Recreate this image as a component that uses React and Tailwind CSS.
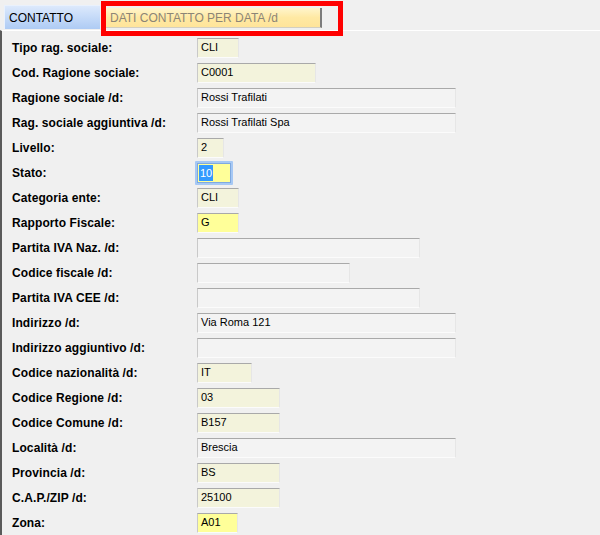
import React from 'react';

const beige = 'bg-[#f3f3dc]';
const yellow = 'bg-[#ffff99]';
const gray = 'bg-[#f3f3f3]';

const rows = [
  { label: 'Tipo rag. sociale:', value: 'CLI', w: 'w-[42px]', bg: beige },
  { label: 'Cod. Ragione sociale:', value: 'C0001', w: 'w-[119px]', bg: beige },
  { label: 'Ragione sociale /d:', value: 'Rossi Trafilati', w: 'w-[259px]', bg: gray },
  { label: 'Rag. sociale aggiuntiva /d:', value: 'Rossi Trafilati Spa', w: 'w-[259px]', bg: gray },
  { label: 'Livello:', value: '2', w: 'w-[27px]', bg: beige },
  { label: 'Stato:', value: '10', w: 'w-[34px]', bg: yellow, focused: true },
  { label: 'Categoria ente:', value: 'CLI', w: 'w-[42px]', bg: beige },
  { label: 'Rapporto Fiscale:', value: 'G', w: 'w-[42px]', bg: yellow },
  { label: 'Partita IVA Naz. /d:', value: '', w: 'w-[223px]', bg: gray },
  { label: 'Codice fiscale /d:', value: '', w: 'w-[153px]', bg: gray },
  { label: 'Partita IVA CEE /d:', value: '', w: 'w-[223px]', bg: gray },
  { label: 'Indirizzo /d:', value: 'Via Roma 121', w: 'w-[259px]', bg: gray },
  { label: 'Indirizzo aggiuntivo /d:', value: '', w: 'w-[259px]', bg: gray },
  { label: 'Codice nazionalità /d:', value: 'IT', w: 'w-[55px]', bg: beige },
  { label: 'Codice Regione /d:', value: '03', w: 'w-[83px]', bg: beige },
  { label: 'Codice Comune /d:', value: 'B157', w: 'w-[83px]', bg: beige },
  { label: 'Località /d:', value: 'Brescia', w: 'w-[259px]', bg: gray },
  { label: 'Provincia /d:', value: 'BS', w: 'w-[83px]', bg: beige },
  { label: 'C.A.P./ZIP /d:', value: '25100', w: 'w-[83px]', bg: beige },
  { label: 'Zona:', value: 'A01', w: 'w-[41px]', bg: yellow },
];

const Field = ({ row }) => {
  if (row.focused) {
    return (
      <div className="ml-[-2px] rounded-[1px] border-2 border-[#a6c8f4] p-0">
        <div className={`${row.w} h-[20px] ${row.bg} border border-[#7fa9e0] flex items-center pl-[1px]`}>
          <span className="bg-[#3399ff] text-white px-[1px] leading-[16px]">{row.value}</span>
        </div>
      </div>
    );
  }
  return (
    <div
      className={`${row.w} h-[20px] ${row.bg} border border-t-[#a9a9a9] border-l-[#c9c9c9] border-r-[#e6e6e6] border-b-[#fbfbfb] flex items-center pl-[3px] text-black`}
    >
      {row.value}
    </div>
  );
};

export default function App() {
  return (
    <div
      className="w-[600px] h-[535px] bg-[#f0f0f0] overflow-hidden relative"
      style={{ fontFamily: '"Liberation Sans", Arial, sans-serif' }}
    >
      {/* tab strip */}
      <div className="h-[30px] flex items-start pt-[5px] pl-[4px]">
        <div className="h-[24px] w-[96px] bg-gradient-to-b from-[#dce9fc] to-[#aecbf4] border-l border-t border-[#e9f1fd] flex items-center pl-[4px] text-[12px] text-black">
          CONTATTO
        </div>
        <div className="ml-[6px] mt-[3px] h-[20px] w-[216px] bg-gradient-to-b from-[#fff5cc] via-[#ffe9a3] to-[#ffe49a] border-r-2 border-r-[#7c7c7c] border-b border-b-[#d3cfc0] flex items-center pl-[4px] text-[12px] text-[#8c8576]">
          DATI CONTATTO PER DATA /d
        </div>
      </div>

      {/* annotation box over the second tab */}
      <div className="absolute left-[101px] top-[1px] w-[242px] h-[35px] border-[5px] border-[#ff0000] pointer-events-none" />

      {/* form body */}
      <div className="h-[505px] border-t border-white border-l-2 border-l-[#5a5a5a] pt-[4px] pl-[10px] text-[11px]">
        {rows.map((row) => (
          <div key={row.label} className="h-[25px] flex items-center">
            <div className="w-[185px] font-bold text-black text-[12px] tracking-[0.1px]">{row.label}</div>
            <Field row={row} />
          </div>
        ))}
      </div>
    </div>
  );
}
